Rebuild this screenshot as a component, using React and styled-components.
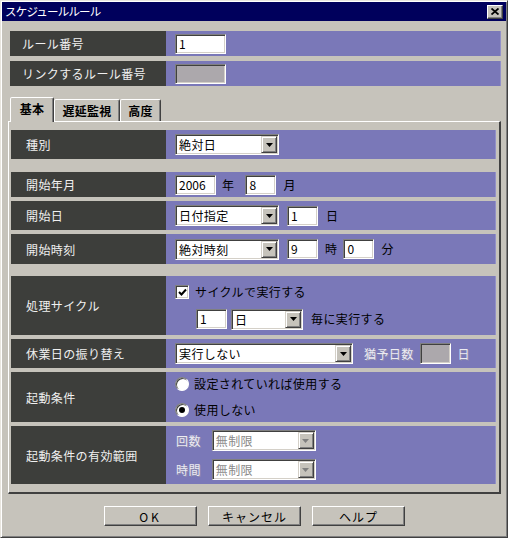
import React from 'react';
import styled, { createGlobalStyle } from 'styled-components';

const FACE = '#c6c3bb';
const PURPLE = '#7a78b8';
const DARK = '#3d3e3b';

const Global = createGlobalStyle`
  html, body { margin: 0; padding: 0; background: ${FACE}; }
  body { font-family: "Noto Sans CJK JP", "Noto Sans", sans-serif; font-size: 12px; }
  * { box-sizing: border-box; }
`;

const Window = styled.div`
  width: 508px;
  height: 538px;
  background: ${FACE};
  border: 1px solid;
  border-color: #e8e5de #404040 #404040 #e8e5de;
  box-shadow: inset 1px 1px 0 #fff, inset -1px -1px 0 #808080;
  padding: 1px;
  display: flex;
  flex-direction: column;
`;

const TitleBar = styled.div`
  height: 19px;
  background: #00005c;
  color: #fff;
  display: flex;
  align-items: center;
  justify-content: space-between;
  padding: 0 3px 0 3px;
`;

const Title = styled.span`
  font-size: 11.5px;
  letter-spacing: -0.8px;
  line-height: 1;
`;

const CloseBtn = styled.span`
  width: 16px;
  height: 14px;
  background: ${FACE};
  border: 1px solid;
  border-color: #fff #404040 #404040 #fff;
  box-shadow: inset -1px -1px 0 #808080;
  display: flex;
  align-items: center;
  justify-content: center;
`;

const Content = styled.div`
  display: flex;
  flex-direction: column;
  padding: 10px 5px 0 6px;
`;

const TopRows = styled.div`
  display: flex;
  flex-direction: column;
  gap: 5px;
  margin-left: 2px;
`;

const Row = styled.div`
  display: grid;
  grid-template-columns: ${p => p.$labelW || 155}px 1fr;
  height: ${p => p.$h}px;
  margin-top: ${p => p.$mt || 0}px;
`;

const Label = styled.div`
  background: ${DARK};
  color: #f0f0f0;
  display: flex;
  align-items: center;
  padding-left: ${p => p.$pad ?? 15}px;
  letter-spacing: 0.4px;
  white-space: nowrap;
`;

const Value = styled.div`
  background: ${PURPLE};
  display: flex;
  flex-direction: column;
  justify-content: center;
  gap: ${p => p.$gap || 0}px;
  padding-left: 9px;
  box-shadow: inset -1px 0 0 #9290c8;
`;

const Line = styled.div`
  display: flex;
  align-items: center;
  height: ${p => p.$h || 20}px;
  margin-left: ${p => p.$indent || 0}px;
`;

const Text = styled.span`
  margin-left: ${p => p.$ml || 0}px;
  color: ${p => (p.$disabled ? '#ecebf2' : '#000')};
  text-shadow: ${p => (p.$disabled ? '1px 1px 0 #8e8cae' : 'none')};
  letter-spacing: 0.4px;
  white-space: nowrap;
  line-height: 1;
`;

const TextBox = styled.div`
  width: ${p => p.$w}px;
  height: ${p => p.$h || 20}px;
  margin-left: ${p => p.$ml || 0}px;
  background: ${p => (p.$gray ? '#aca8ac' : '#fff')};
  border: 1px solid;
  border-color: #808080 #fff #fff #808080;
  box-shadow: inset 1px 1px 0 #404040, inset -1px -1px 0 #d4d0c8;
  display: flex;
  align-items: center;
  padding-left: 3px;
  font-size: 12px;
  color: #000;
  line-height: 1;
`;

const Combo = styled.div`
  width: ${p => p.$w}px;
  height: 21px;
  margin-left: ${p => p.$ml || 0}px;
  background: #fff;
  border: 1px solid;
  border-color: #808080 #fff #fff #808080;
  box-shadow: inset 1px 1px 0 #404040, inset -1px -1px 0 #d4d0c8;
  padding: 1px;
  display: flex;
`;

const ComboText = styled.span`
  flex: 1;
  display: flex;
  align-items: center;
  padding-left: 2px;
  color: ${p => (p.$disabled ? '#8a8a8a' : '#000')};
  letter-spacing: 0.4px;
  white-space: nowrap;
  overflow: hidden;
`;

const ComboBtn = styled.span`
  width: 16px;
  background: ${FACE};
  border: 1px solid;
  border-color: #d4d0c8 #404040 #404040 #d4d0c8;
  box-shadow: inset 1px 1px 0 #fff, inset -1px -1px 0 #808080;
  display: flex;
  align-items: center;
  justify-content: center;
`;

const CheckBox = styled.span`
  width: 14px;
  height: 14px;
  background: #fff;
  border: 1px solid;
  border-color: #808080 #fff #fff #808080;
  box-shadow: inset 1px 1px 0 #404040, inset -1px -1px 0 #d4d0c8;
  display: flex;
  align-items: center;
  justify-content: center;
  flex: none;
`;

const Radio = styled.span`
  width: 14px;
  height: 14px;
  border-radius: 50%;
  background: #fff;
  border: 1px solid;
  border-color: #808080 #fff #fff #808080;
  box-shadow: inset 1px 1px 0 #404040;
  display: flex;
  align-items: center;
  justify-content: center;
  flex: none;
  &::after {
    content: '';
    width: 6px;
    height: 6px;
    border-radius: 50%;
    background: ${p => (p.$checked ? '#000' : 'transparent')};
  }
`;

const TabStrip = styled.div`
  display: flex;
  align-items: flex-end;
  height: 24px;
  margin-top: 11px;
  padding-left: 2px;
  position: relative;
  z-index: 1;
`;

const Tab = styled.div`
  height: ${p => (p.$active ? 25 : 22)}px;
  margin-bottom: ${p => (p.$active ? -1 : 0)}px;
  width: ${p => p.$w}px;
  background: ${FACE};
  border: 1px solid;
  border-bottom: none;
  border-color: #fff #404040 transparent #fff;
  box-shadow: inset -1px 0 0 #808080;
  border-radius: 2px 2px 0 0;
  display: flex;
  align-items: center;
  justify-content: center;
  font-weight: bold;
  letter-spacing: 0.3px;
  padding-bottom: ${p => (p.$active ? 3 : 0)}px;
`;

const Panel = styled.div`
  border: 1px solid;
  border-right-width: 2px;
  border-bottom-width: 2px;
  border-color: #fff #404040 #404040 #fff;
  padding: 8px 3px 8px 2px;
  display: flex;
  flex-direction: column;
  gap: 4px;
`;

const Buttons = styled.div`
  display: flex;
  justify-content: center;
  gap: 11px;
  margin-top: 12px;
`;

const Button = styled.div`
  width: 93px;
  height: 20px;
  background: ${FACE};
  border: 1px solid;
  border-color: #fff #404040 #404040 #fff;
  box-shadow: inset -1px -1px 0 #808080;
  display: flex;
  align-items: center;
  justify-content: center;
  letter-spacing: ${p => p.$ls || 0.5}px;
  color: #000;
`;

const Arrow = ({ disabled }) => (
  <svg width="7" height="4" viewBox="0 0 7 4">
    <polygon points="0,0 7,0 3.5,4" fill={disabled ? '#808080' : '#000'} />
  </svg>
);

const Select = ({ w, ml, value, disabled }) => (
  <Combo $w={w} $ml={ml}>
    <ComboText $disabled={disabled}>{value}</ComboText>
    <ComboBtn>
      <Arrow disabled={disabled} />
    </ComboBtn>
  </Combo>
);

export default function App() {
  return (
    <>
      <Global />
      <Window>
        <TitleBar>
          <Title>スケジュールルール</Title>
          <CloseBtn>
            <svg width="8" height="7" viewBox="0 0 8 7">
              <path d="M0.5 0.5 L7.5 6.5 M7.5 0.5 L0.5 6.5" stroke="#000" strokeWidth="1.8" />
            </svg>
          </CloseBtn>
        </TitleBar>
        <Content>
          <TopRows>
            <Row $h={25} $labelW={156}>
              <Label $pad={12}>ルール番号</Label>
              <Value>
                <Line>
                  <TextBox $w={51}>1</TextBox>
                </Line>
              </Value>
            </Row>
            <Row $h={25} $labelW={156}>
              <Label $pad={12}>リンクするルール番号</Label>
              <Value>
                <Line>
                  <TextBox $w={51} $gray />
                </Line>
              </Value>
            </Row>
          </TopRows>

          <TabStrip>
            <Tab $active $w={44}>基本</Tab>
            <Tab $w={66}>遅延監視</Tab>
            <Tab $w={41}>高度</Tab>
          </TabStrip>

          <Panel>
            <Row $h={29}>
              <Label>種別</Label>
              <Value>
                <Line>
                  <Select w={104} value="絶対日" />
                </Line>
              </Value>
            </Row>

            <Row $h={25} $mt={9}>
              <Label>開始年月</Label>
              <Value>
                <Line>
                  <TextBox $w={41}>2006</TextBox>
                  <Text $ml={6}>年</Text>
                  <TextBox $w={31} $ml={11}>8</TextBox>
                  <Text $ml={7}>月</Text>
                </Line>
              </Value>
            </Row>

            <Row $h={29}>
              <Label>開始日</Label>
              <Value>
                <Line>
                  <Select w={104} value="日付指定" />
                  <TextBox $w={31} $ml={8}>1</TextBox>
                  <Text $ml={8}>日</Text>
                </Line>
              </Value>
            </Row>

            <Row $h={30}>
              <Label>開始時刻</Label>
              <Value>
                <Line>
                  <Select w={104} value="絶対時刻" />
                  <TextBox $w={31} $ml={8}>9</TextBox>
                  <Text $ml={7}>時</Text>
                  <TextBox $w={31} $ml={6}>0</TextBox>
                  <Text $ml={7}>分</Text>
                </Line>
              </Value>
            </Row>

            <Row $h={59} $mt={8}>
              <Label>処理サイクル</Label>
              <Value $gap={7}>
                <Line>
                  <CheckBox>
                    <svg width="9" height="9" viewBox="0 0 9 9">
                      <path d="M1 4 L3.5 6.5 L8 1.5" stroke="#000" strokeWidth="2" fill="none" />
                    </svg>
                  </CheckBox>
                  <Text $ml={6}>サイクルで実行する</Text>
                </Line>
                <Line $indent={21}>
                  <TextBox $w={31}>1</TextBox>
                  <Select w={72} ml={4} value="日" />
                  <Text $ml={8}>毎に実行する</Text>
                </Line>
              </Value>
            </Row>

            <Row $h={29}>
              <Label>休業日の振り替え</Label>
              <Value>
                <Line>
                  <Select w={178} value="実行しない" />
                  <Text $ml={11} $disabled>猶予日数</Text>
                  <TextBox $w={31} $h={21} $ml={6} $gray />
                  <Text $ml={7} $disabled>日</Text>
                </Line>
              </Value>
            </Row>

            <Row $h={50}>
              <Label>起動条件</Label>
              <Value $gap={10}>
                <Line $h={16}>
                  <Radio />
                  <Text $ml={5}>設定されていれば使用する</Text>
                </Line>
                <Line $h={16}>
                  <Radio $checked />
                  <Text $ml={5}>使用しない</Text>
                </Line>
              </Value>
            </Row>

            <Row $h={58}>
              <Label>起動条件の有効範囲</Label>
              <Value $gap={9}>
                <Line>
                  <Text $ml={1} $disabled>回数</Text>
                  <Select w={104} ml={11} value="無制限" disabled />
                </Line>
                <Line>
                  <Text $ml={1} $disabled>時間</Text>
                  <Select w={104} ml={11} value="無制限" disabled />
                </Line>
              </Value>
            </Row>
          </Panel>

          <Buttons>
            <Button $ls={3}>OK</Button>
            <Button $ls={1}>キャンセル</Button>
            <Button $ls={1}>ヘルプ</Button>
          </Buttons>
        </Content>
      </Window>
    </>
  );
}
